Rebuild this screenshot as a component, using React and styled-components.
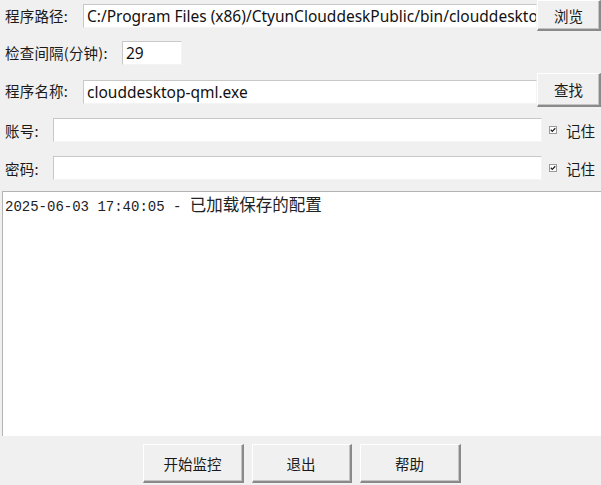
import React from 'react';
import styled, { createGlobalStyle } from 'styled-components';

const GlobalStyle = createGlobalStyle`
  html, body {
    margin: 0;
    padding: 0;
    background: #f0f0f0;
  }
  body {
    width: 601px;
    height: 485px;
    overflow: hidden;
    font-family: "Noto Sans", "Noto Sans CJK SC", sans-serif;
  }
`;

const Window = styled.div`
  width: 601px;
  height: 485px;
  background: #f0f0f0;
  display: flex;
  flex-direction: column;
  color: #1a1a1a;
`;

const Row = styled.div`
  display: flex;
  align-items: center;
  height: ${({ h }) => h}px;
  margin-top: ${({ mt }) => mt || 0}px;
  padding-left: 5px;
`;

const Label = styled.span`
  font-family: "Noto Sans CJK SC", sans-serif;
  font-size: 14.5px;
  width: ${({ w }) => w}px;
  flex-shrink: 0;
  white-space: nowrap;
  letter-spacing: 0.2px;
`;

const Entry = styled.div`
  height: 24px;
  width: ${({ w }) => (w ? `${w}px` : 'auto')};
  flex: ${({ w }) => (w ? '0 0 auto' : '1 1 0')};
  min-width: 0;
  margin-top: ${({ mt }) => mt || 0}px;
  box-sizing: border-box;
  background: #fff;
  border-top: 1px solid #c8c8c8;
  border-left: 1px solid #c8c8c8;
  border-right: 1px solid #f4f4f4;
  border-bottom: 1px solid #f4f4f4;
  display: flex;
  align-items: center;
  padding-left: 3px;
  overflow: hidden;
  white-space: nowrap;
  font-family: "Noto Sans", "Noto Sans CJK SC", sans-serif;
  font-size: 15.5px;
  color: #111;
`;

const EntryText = styled.span`
  display: block;
  overflow: hidden;
  text-overflow: clip;
  white-space: nowrap;
  max-width: 100%;
`;

const Button = styled.div`
  box-sizing: border-box;
  width: ${({ w }) => w}px;
  height: ${({ h }) => h}px;
  flex-shrink: 0;
  background: #f0f0f0;
  border-top: 1px solid #ffffff;
  border-left: 1px solid #ffffff;
  border-right: 2px solid #8a8a8a;
  border-bottom: 2px solid #8a8a8a;
  box-shadow: inset -1px -1px 0 #c4c4c4;
  display: flex;
  align-items: center;
  justify-content: center;
  font-family: "Noto Sans CJK SC", sans-serif;
  font-size: 14.5px;
  color: #1a1a1a;
`;

const RowButton = styled(Button)`
  align-self: flex-start;
`;

const Remember = styled.div`
  display: flex;
  align-items: center;
  gap: 9px;
  margin-left: 7px;
  width: 52px;
  font-family: "Noto Sans CJK SC", sans-serif;
  font-size: 14.5px;
`;

const LogBox = styled.div`
  margin-top: ${({ mt }) => mt}px;
  margin-left: 2px;
  height: 245px;
  box-sizing: border-box;
  background: #fff;
  border-top: 1px solid #b4b4b4;
  border-left: 1px solid #b4b4b4;
  padding: 0 0 0 2px;
`;

const LogLine = styled.div`
  display: flex;
  align-items: baseline;
  white-space: pre;
  color: #222;
`;

const LogTime = styled.span`
  font-family: "Liberation Mono", monospace;
  font-size: 14px;
`;

const LogMsg = styled.span`
  font-family: "Noto Sans CJK SC", sans-serif;
  font-size: 16.5px;
  font-weight: 400;
`;

const Footer = styled.div`
  display: flex;
  justify-content: center;
  gap: 8px;
  margin-top: 8px;
  padding-left: 2px;
`;

function CheckMark() {
  return (
    <svg width="8" height="8" viewBox="0 0 8 8">
      <rect x="0.5" y="0.5" width="7" height="7" fill="#fff" stroke="#9a9a9a" />
      <path d="M1.8 3.8 L3.3 5.4 L6.3 2.2" fill="none" stroke="#222" strokeWidth="1.3" />
    </svg>
  );
}

export default function App() {
  return (
    <>
      <GlobalStyle />
      <Window>
        <Row h={31}>
          <Label w={78}>程序路径:</Label>
          <Entry>
            <EntryText>C:/Program Files (x86)/CtyunClouddeskPublic/bin/clouddesktop-qml.exe</EntryText>
          </Entry>
          <RowButton w={64} h={31}>浏览</RowButton>
        </Row>
        <Row h={25} mt={9}>
          <Label w={117}>检查间隔(分钟):</Label>
          <Entry w={60}>29</Entry>
        </Row>
        <Row h={34} mt={8}>
          <Label w={78}>程序名称:</Label>
          <Entry mt={3}>clouddesktop-qml.exe</Entry>
          <RowButton w={64} h={34}>查找</RowButton>
        </Row>
        <Row h={24} mt={11}>
          <Label w={48}>账号:</Label>
          <Entry />
          <Remember>
            <CheckMark />
            记住
          </Remember>
        </Row>
        <Row h={24} mt={14}>
          <Label w={48}>密码:</Label>
          <Entry />
          <Remember>
            <CheckMark />
            记住
          </Remember>
        </Row>
        <LogBox mt={11}>
          <LogLine>
            <LogTime>2025-06-03 17:40:05 - </LogTime>
            <LogMsg>已加载保存的配置</LogMsg>
          </LogLine>
        </LogBox>
        <Footer>
          <Button w={101} h={39}>开始监控</Button>
          <Button w={100} h={39}>退出</Button>
          <Button w={101} h={39}>帮助</Button>
        </Footer>
      </Window>
    </>
  );
}
